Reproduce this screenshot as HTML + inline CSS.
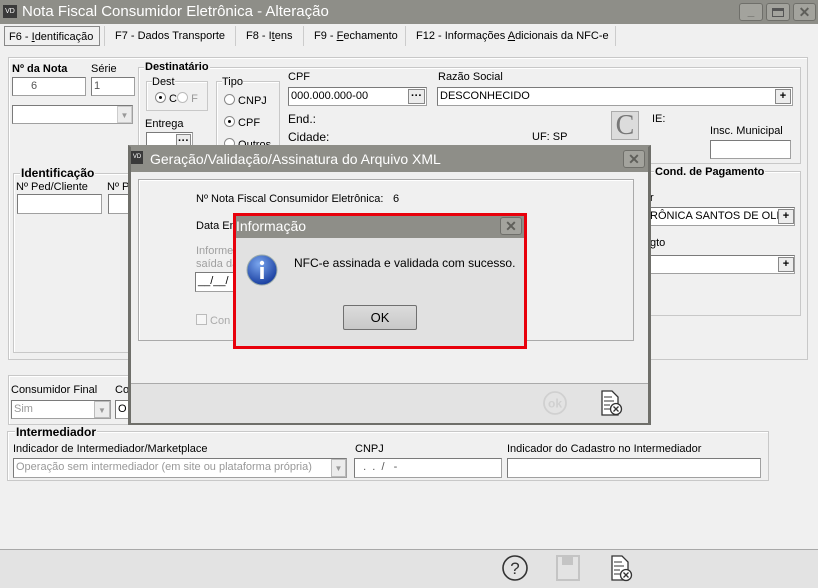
<!DOCTYPE html>
<html><head><meta charset="utf-8"><style>
*{box-sizing:border-box;margin:0;padding:0}
body{width:818px;height:588px;overflow:hidden;background:#f0f0f0;font-family:"Liberation Sans",sans-serif;font-size:11px;color:#000;position:relative}
.a{position:absolute;white-space:nowrap}
.inp{position:absolute;background:#fff;border:1px solid #a0a0a0;border-top-color:#7a7a7a;border-left-color:#7a7a7a;font-size:11px;padding:2px 2px;white-space:nowrap;overflow:hidden}
.grp{position:absolute;border:1px solid #c8c8c8;box-shadow:1px 1px 0 #fff inset}
.btn{position:absolute;background:#ececec;border:1px solid #888;font-weight:bold;text-align:center;font-size:11px;line-height:12px}
.rad{display:inline-block;width:11px;height:11px;border-radius:50%;border:1px solid #8a8a8a;background:#fff;vertical-align:-1px;position:relative}
.rad.on::after{content:"";position:absolute;left:3px;top:3px;width:3px;height:3px;border-radius:50%;background:#000}
.tb{position:absolute;background:#8e8e88;color:#fff}
.xb{position:absolute;border:1px solid #6f6f6a;border-radius:3px;background:#a3a39d;color:#5f5f5a;font-weight:bold;text-align:center}
.gray{color:#9a9a9a}
</style></head><body>
<div class="tb" style="left:0;top:0;width:818px;height:24px"></div>
<div class="a" style="left:3px;top:5px;width:14px;height:13px;background:#3a3a3a;color:#fff;font-size:7px;line-height:13px;text-align:center">VD</div>
<div class="a" style="left:22px;top:3px;color:#fff;font-size:15px">Nota Fiscal Consumidor Eletrônica - Alteração</div>
<div class="xb" style="left:739px;top:3px;width:24px;height:18px;font-size:12px;line-height:14px">_</div>
<div class="xb" style="left:766px;top:3px;width:24px;height:18px"><div style="margin:4px 5px;height:9px;border:1px solid #555;border-top-width:3px"></div></div>
<div class="xb" style="left:793px;top:3px;width:23px;height:18px;font-size:14px;line-height:17px">✕</div>
<div class="a" style="left:4px;top:26px;width:96px;height:20px;border:1px solid #888;background:#f0f0f0;padding:4px 4px">F6 - <u>I</u>dentificação</div>
<div class="a" style="left:104px;top:26px;height:20px;border-left:1px solid #ccc;border-right:1px solid #ccc;padding:4px 10px;width:132px">F7 - Dados Transporte</div>
<div class="a" style="left:236px;top:26px;height:20px;border-right:1px solid #ccc;padding:4px 10px;width:68px">F8 - I<u>t</u>ens</div>
<div class="a" style="left:304px;top:26px;height:20px;border-right:1px solid #ccc;padding:4px 10px;width:102px">F9 - <u>F</u>echamento</div>
<div class="a" style="left:406px;top:26px;height:20px;border-right:1px solid #ccc;padding:4px 10px;width:210px">F12 - Informações <u>A</u>dicionais da NFC-e</div>
<div class="grp" style="left:8px;top:57px;width:800px;height:303px"></div>
<div class="a" style="left:12px;top:63px;font-weight:bold">Nº da Nota</div>
<div class="a" style="left:91px;top:63px">Série</div>
<div class="inp" style="left:12px;top:77px;width:74px;height:19px;color:#555;padding-left:18px">6</div>
<div class="inp" style="left:91px;top:77px;width:44px;height:19px;color:#555">1</div>
<div class="inp" style="left:12px;top:105px;width:121px;height:19px;background:#fff"></div>
<div class="a" style="left:117px;top:106px;width:15px;height:17px;background:#ececec;border:1px solid #ccc;color:#999;font-size:8px;text-align:center;line-height:17px">▼</div>
<div class="grp" style="left:138px;top:67px;width:663px;height:97px"></div>
<div class="a" style="left:144px;top:61px;font-weight:bold;background:#f0f0f0;padding:0 1px">Destinatário</div>
<div class="grp" style="left:146px;top:81px;width:62px;height:30px"></div>
<div class="a" style="left:152px;top:76px;background:#f0f0f0">Dest</div>
<div class="a" style="left:155px;top:92px"><span class="rad on"></span> C<span class="rad" style="border-color:#bbb"></span> <span class="gray">F</span></div>
<div class="a" style="left:145px;top:118px">Entrega</div>
<div class="inp" style="left:146px;top:132px;width:47px;height:17px"></div>
<div class="btn" style="left:176px;top:134px;width:15px;height:13px">···</div>
<div class="grp" style="left:216px;top:81px;width:64px;height:80px"></div>
<div class="a" style="left:222px;top:76px;background:#f0f0f0">Tipo</div>
<div class="a" style="left:224px;top:94px"><span class="rad"></span> CNPJ</div>
<div class="a" style="left:224px;top:116px"><span class="rad on"></span> CPF</div>
<div class="a" style="left:224px;top:138px"><span class="rad"></span> Outros</div>
<div class="a" style="left:288px;top:71px">CPF</div>
<div class="inp" style="left:288px;top:87px;width:139px;height:19px">000.000.000-00</div>
<div class="btn" style="left:408px;top:89px;width:17px;height:15px">···</div>
<div class="a" style="left:288px;top:112px;font-size:12px">End.:</div>
<div class="a" style="left:288px;top:130px;font-size:12px">Cidade:</div>
<div class="a" style="left:532px;top:131px">UF: SP</div>
<div class="a" style="left:438px;top:71px">Razão Social</div>
<div class="inp" style="left:437px;top:87px;width:356px;height:19px">DESCONHECIDO</div>
<div class="btn" style="left:775px;top:89px;width:16px;height:15px">+</div>
<div class="a" style="left:611px;top:111px;width:28px;height:29px;background:#dcdcdc;border:1px solid #aaa;font-family:'Liberation Serif',serif;font-size:28px;color:#777;text-align:center;line-height:28px">C</div>
<div class="a" style="left:652px;top:113px">IE:</div>
<div class="a" style="left:710px;top:125px">Insc. Municipal</div>
<div class="inp" style="left:710px;top:140px;width:81px;height:19px"></div>
<div class="grp" style="left:640px;top:171px;width:161px;height:145px"></div>
<div class="a" style="left:654px;top:166px;font-weight:bold;background:#f0f0f0;padding:0 1px">Cond. de Pagamento</div>
<div class="a" style="left:650px;top:192px">r</div>
<div class="inp" style="left:645px;top:207px;width:150px;height:19px;padding-left:4px">RÔNICA SANTOS DE OLIVE</div>
<div class="btn" style="left:778px;top:209px;width:16px;height:15px">+</div>
<div class="a" style="left:650px;top:237px">gto</div>
<div class="inp" style="left:645px;top:255px;width:150px;height:19px"></div>
<div class="btn" style="left:778px;top:257px;width:16px;height:15px">+</div>
<div class="grp" style="left:13px;top:173px;width:120px;height:180px"></div>
<div class="a" style="left:20px;top:166px;font-weight:bold;font-size:12px;background:#f0f0f0;padding:0 1px">Identificação</div>
<div class="a" style="left:16px;top:181px">Nº Ped/Cliente</div>
<div class="a" style="left:107px;top:181px">Nº P</div>
<div class="inp" style="left:17px;top:194px;width:85px;height:20px"></div>
<div class="inp" style="left:108px;top:194px;width:25px;height:20px"></div>
<div class="grp" style="left:8px;top:375px;width:130px;height:50px"></div>
<div class="a" style="left:11px;top:384px">Consumidor Final</div>
<div class="a" style="left:115px;top:384px">Co</div>
<div class="inp" style="left:11px;top:400px;width:100px;height:19px;color:#999">Sim</div>
<div class="a" style="left:94px;top:401px;width:16px;height:17px;background:#ececec;border:1px solid #bbb;color:#999;font-size:8px;text-align:center;line-height:17px">▼</div>
<div class="inp" style="left:115px;top:400px;width:20px;height:19px">O</div>
<div class="grp" style="left:7px;top:431px;width:762px;height:50px"></div>
<div class="a" style="left:15px;top:425px;font-weight:bold;font-size:12px;background:#f0f0f0;padding:0 1px">Intermediador</div>
<div class="a" style="left:13px;top:443px">Indicador de Intermediador/Marketplace</div>
<div class="a" style="left:355px;top:443px">CNPJ</div>
<div class="a" style="left:507px;top:443px">Indicador do Cadastro no Intermediador</div>
<div class="inp" style="left:13px;top:458px;width:334px;height:20px;color:#999">Operação sem intermediador (em site ou plataforma própria)</div>
<div class="a" style="left:331px;top:459px;width:15px;height:18px;background:#ececec;border:1px solid #bbb;color:#999;font-size:8px;text-align:center;line-height:18px">▼</div>
<div class="inp" style="left:354px;top:458px;width:148px;height:20px;color:#555">&nbsp; . &nbsp;. &nbsp;/ &nbsp; -</div>
<div class="inp" style="left:507px;top:458px;width:254px;height:20px"></div>
<div class="a" style="left:0;top:549px;width:818px;height:39px;background:#e3e3e3;border-top:1px solid #a8a8a8"></div>
<svg class="a" style="left:500px;top:553px" width="140" height="32">
<circle cx="15" cy="15" r="12" fill="none" stroke="#333" stroke-width="1.6"/>
<text x="15" y="21" font-size="17" text-anchor="middle" font-family="Liberation Sans" fill="#333">?</text>
<rect x="57" y="3" width="22" height="24" fill="none" stroke="#c4c4c4" stroke-width="2"/><rect x="62" y="3" width="11" height="9" fill="#c4c4c4"/>
<path d="M112 3h10l6 6v18h-16z" fill="#fff" stroke="#333" stroke-width="1.3"/><path d="M114 9h8M114 13h10M114 17h6M114 21h6" stroke="#333"/>
<circle cx="126" cy="22" r="5.5" fill="#fff" stroke="#333" stroke-width="1.3"/><path d="M123.5 19.5l5 5M128.5 19.5l-5 5" stroke="#333" stroke-width="1.3"/>
</svg>
<div class="a" style="left:128px;top:145px;width:523px;height:280px;background:#f0f0f0;border:3px solid #6f6f6a;border-top:2px solid #8e8e88"></div>
<div class="tb" style="left:131px;top:147px;width:517px;height:25px"></div>
<div class="a" style="left:131px;top:151px;width:12px;height:13px;background:#3a3a3a;color:#fff;font-size:6px;line-height:13px;text-align:center">VD</div>
<div class="a" style="left:150px;top:151px;color:#fff;font-size:14px">Geração/Validação/Assinatura do Arquivo XML</div>
<div class="xb" style="left:623px;top:150px;width:22px;height:18px;font-size:14px;line-height:17px">✕</div>
<div class="a" style="left:138px;top:179px;width:496px;height:162px;border:1px solid #aaa;box-shadow:1px 1px 0 #fff inset"></div>
<div class="a" style="left:196px;top:193px">Nº Nota Fiscal Consumidor Eletrônica:</div>
<div class="a" style="left:393px;top:193px">6</div>
<div class="a" style="left:196px;top:220px">Data Em</div>
<div class="a" style="left:196px;top:245px;color:#a0a0a0;line-height:13px">Informe<br>saída da</div>
<div class="inp" style="left:195px;top:272px;width:40px;height:20px">__/__/</div>
<div class="a" style="left:196px;top:314px;color:#aaa"><span style="display:inline-block;width:11px;height:11px;border:1px solid #bbb;background:#f6f6f6;vertical-align:-1px"></span> Con</div>
<div class="a" style="left:131px;top:383px;width:517px;height:40px;background:#e3e3e3;border-top:1px solid #aaa"></div>
<svg class="a" style="left:540px;top:388px" width="90" height="32">
<circle cx="15" cy="15" r="11" fill="none" stroke="#d0d0d0" stroke-width="1.8"/>
<text x="15" y="19.5" font-size="12" font-weight="bold" text-anchor="middle" font-family="Liberation Sans" fill="#d0d0d0">ok</text>
<path d="M62 3h10l6 6v18h-16z" fill="#fff" stroke="#333" stroke-width="1.3"/><path d="M64 9h8M64 13h10M64 17h6M64 21h6" stroke="#333"/>
<circle cx="76" cy="21" r="5.5" fill="#fff" stroke="#333" stroke-width="1.3"/><path d="M73.5 18.5l5 5M78.5 18.5l-5 5" stroke="#333" stroke-width="1.3"/>
</svg>
<div class="a" style="left:233px;top:213px;width:294px;height:136px;border:3px solid #e8000b;background:#e1e1e1"></div>
<div class="tb" style="left:236px;top:216px;width:288px;height:22px"></div>
<div class="a" style="left:236px;top:218px;color:#fff;font-size:14px">Informação</div>
<div class="xb" style="left:500px;top:217px;width:22px;height:18px;font-size:14px;line-height:17px">✕</div>
<svg class="a" style="left:246px;top:254px" width="34" height="34">
<defs><radialGradient id="g" cx="40%" cy="30%" r="70%"><stop offset="0" stop-color="#7aa6ee"/><stop offset="1" stop-color="#1a3fa0"/></radialGradient></defs>
<circle cx="16" cy="16" r="15" fill="url(#g)" stroke="#9aa" stroke-width="1"/>
<circle cx="16" cy="9" r="2.2" fill="#fff"/><rect x="14.2" y="13" width="3.6" height="12" fill="#fff"/>
</svg>
<div class="a" style="left:294px;top:256px;font-size:12px">NFC-e assinada e validada com sucesso.</div>
<div class="a" style="left:343px;top:305px;width:74px;height:25px;border:1px solid #707070;border-radius:2px;background:linear-gradient(#dcdcdc,#c8c8c8);text-align:center;line-height:23px;font-size:13px">OK</div>
</body></html>
